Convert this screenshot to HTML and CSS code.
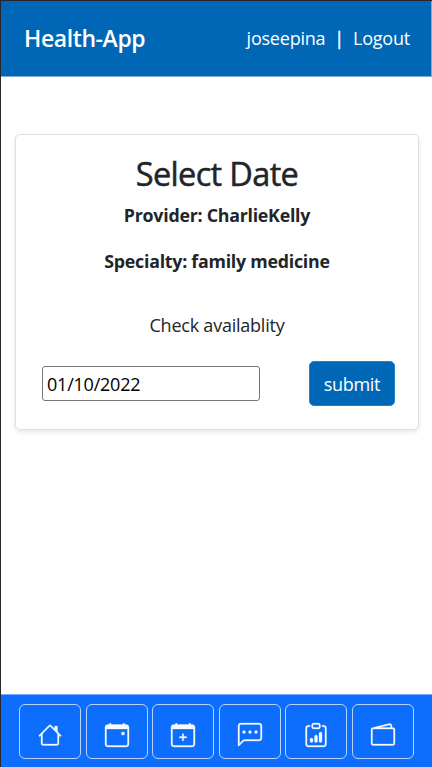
FILE: index.html
```html
<!DOCTYPE html>
<html lang="en">
<head>
<meta charset="utf-8">
<meta name="viewport" content="width=device-width, initial-scale=1">
<title>Health-App</title>
<link rel="stylesheet" href="styles.css">
</head>
<body>
<header class="topbar">
  <a class="brand">Health-App</a>
  <nav class="account"><a class="user">joseepina</a><span class="divider">|</span><a class="logout">Logout</a></nav>
</header>
<main>
  <section class="card">
    <h1><span>Select Date</span></h1>
    <p class="detail provider"><span>Provider: CharlieKelly</span></p>
    <p class="detail specialty"><span>Specialty: family medicine</span></p>
    <p class="prompt"><span>Check availablity</span></p>
    <form class="date-form">
      <input class="date" type="text" value="01/10/2022" aria-label="Date">
      <button class="submit" type="button"><span>submit</span></button>
    </form>
  </section>
</main>
<nav class="tabs">
  <a class="tab"><svg viewBox="0 0 16 16"><path fill-rule="evenodd" d="M2 13.5V7h1v6.5a.5.5 0 0 0 .5.5h9a.5.5 0 0 0 .5-.5V7h1v6.5a1.5 1.5 0 0 1-1.5 1.5h-9A1.5 1.5 0 0 1 2 13.5zm11-11V6l-2-2V2.500a.5.5 0 0 1 .5-.5h1a.5.5 0 0 1 .5.5z"/><path fill-rule="evenodd" d="M7.293 1.500a1 1 0 0 1 1.414 0l6.647 6.646a.5.5 0 0 1-.708.708L8 2.207 1.354 8.854a.5.5 0 1 1-.708-.708L7.293 1.500z"/></svg></a>
  <a class="tab"><svg viewBox="0 0 16 16"><path d="M11 6.5a.5.5 0 0 1 .5-.5h1a.5.5 0 0 1 .5.5v1a.5.5 0 0 1-.5.5h-1a.5.5 0 0 1-.5-.5v-1z"/><path d="M3.500 0a.5.5 0 0 1 .5.5V1h8V.5a.5.5 0 0 1 1 0V1h1a2 2 0 0 1 2 2v11a2 2 0 0 1-2 2H2a2 2 0 0 1-2-2V3a2 2 0 0 1 2-2h1V.5a.5.5 0 0 1 .5-.5zM1 4v10a1 1 0 0 0 1 1h12a1 1 0 0 0 1-1V4H1z"/></svg></a>
  <a class="tab"><svg viewBox="0 0 16 16"><path d="M8 7a.5.5 0 0 1 .5.5V9H10a.5.5 0 0 1 0 1H8.500v1.500a.5.5 0 0 1-1 0V10H6a.5.5 0 0 1 0-1h1.500V7.500A.5.5 0 0 1 8 7z"/><path d="M3.500 0a.5.5 0 0 1 .5.5V1h8V.5a.5.5 0 0 1 1 0V1h1a2 2 0 0 1 2 2v11a2 2 0 0 1-2 2H2a2 2 0 0 1-2-2V3a2 2 0 0 1 2-2h1V.5a.5.5 0 0 1 .5-.5zM1 4v10a1 1 0 0 0 1 1h12a1 1 0 0 0 1-1V4H1z"/></svg></a>
  <a class="tab"><svg viewBox="0 0 16 16"><path d="M14 1a1 1 0 0 1 1 1v8a1 1 0 0 1-1 1H4.414A2 2 0 0 0 3 11.586l-2 2V2a1 1 0 0 1 1-1h12zM2 0a2 2 0 0 0-2 2v12.793a.5.5 0 0 0 .854.353l2.853-2.853A1 1 0 0 1 4.414 12H14a2 2 0 0 0 2-2V2a2 2 0 0 0-2-2H2z"/><path d="M5 6a1 1 0 1 1-2 0 1 1 0 0 1 2 0zm4 0a1 1 0 1 1-2 0 1 1 0 0 1 2 0zm4 0a1 1 0 1 1-2 0 1 1 0 0 1 2 0z"/></svg></a>
  <a class="tab"><svg viewBox="0 0 16 16"><path d="M4 11a1 1 0 1 1 2 0v1a1 1 0 1 1-2 0v-1zm6-4a1 1 0 1 1 2 0v5a1 1 0 1 1-2 0V7zM7 9a1 1 0 0 1 2 0v3a1 1 0 1 1-2 0V9z"/><path d="M4 1.500H3a2 2 0 0 0-2 2V14a2 2 0 0 0 2 2h10a2 2 0 0 0 2-2V3.500a2 2 0 0 0-2-2h-1v1h1a1 1 0 0 1 1 1V14a1 1 0 0 1-1 1H3a1 1 0 0 1-1-1V3.500a1 1 0 0 1 1-1h1v-1z"/><path d="M9.500 1a.5.5 0 0 1 .5.5v1a.5.5 0 0 1-.5.5h-3a.5.5 0 0 1-.5-.5v-1a.5.5 0 0 1 .5-.5h3zm-3-1A1.500 1.500 0 0 0 5 1.500v1A1.500 1.500 0 0 0 6.500 4h3A1.500 1.500 0 0 0 11 2.500v-1A1.500 1.500 0 0 0 9.500 0h-3z"/></svg></a>
  <a class="tab"><svg viewBox="0 0 16 16"><path d="M12.136.326A1.500 1.500 0 0 1 14 1.780V3h.5A1.500 1.500 0 0 1 16 4.500v9a1.500 1.500 0 0 1-1.500 1.500h-13A1.500 1.500 0 0 1 0 13.500v-9a1.500 1.500 0 0 1 1.432-1.499L12.136.326zM5.562 3H13V1.780a.5.5 0 0 0-.621-.484L5.562 3zM1.500 4a.5.5 0 0 0-.5.5v9a.5.5 0 0 0 .5.5h13a.5.5 0 0 0 .5-.5v-9a.5.5 0 0 0-.5-.5h-13z"/></svg></a>
</nav>
</body>
</html>
```
FILE: styles.css
```css
* { box-sizing: border-box; }
html { height: 100%; }
body {
  margin: 0;
  height: 100%;
  overflow: hidden;
  display: flex;
  flex-direction: column;
  border-left: 1px solid #25272b;
  border-top: 1px solid #25272b;
  background: #fff;
  color: #212529;
  font: 18px/28px "Open Sans", "Noto Sans", sans-serif;
  white-space: nowrap;
}
h1, p { margin: 0; }
.topbar {
  flex: none;
  height: 76px;
  display: flex;
  justify-content: space-between;
  align-items: center;
  padding: 0 21px 2px 23px;
  background: #0067b6;
  border-bottom: 1px solid #77acd8;
  border-right: 1px solid #77acd8;
  color: #fff;
}
.brand { font-size: 23px; font-weight: 600; letter-spacing: -0.4px; }
.account { display: flex; letter-spacing: -0.22px; }
.divider { margin: 0 9px 0 9px; -webkit-text-stroke: .4px #fff; }
main { flex: 1; padding: 57px 13px 0 14px; }
.card {
  height: 296px;
  border: 1px solid #dfdfdf;
  border-radius: 5px;
  box-shadow: 0 2px 5px rgba(0, 0, 0, .1);
  text-align: center;
}
h1 {
  font-size: 32.5px;
  font-weight: 500;
  line-height: 40px;
  padding-top: 19px;
  letter-spacing: -0.65px;
  -webkit-text-stroke: .5px #212529;
}
.detail { font-weight: 700; font-size: 17.8px; letter-spacing: -0.25px; }
.provider { margin-top: 7px; }
.specialty { margin-top: 18px; }
.prompt { margin-top: 36px; letter-spacing: -0.23px; }
.date-form {
  display: flex;
  align-items: center;
  justify-content: space-between;
  margin: 22px 23px 0 26px;
}
.date {
  width: 218px;
  height: 35px;
  padding: 0 4px;
  border: 1px solid #767676;
  border-radius: 3px;
  background: #fff;
  color: #000;
  font: inherit;
  letter-spacing: -0.22px;
}
.submit {
  width: 86px;
  height: 45px;
  padding: 0;
  border: 1px solid #2680c6;
  border-radius: 5px;
  background: #0067b6;
  color: #fff;
  font: inherit;
  letter-spacing: -0.3px;
}
.tabs {
  flex: none;
  height: 73px;
  display: flex;
  gap: 4.6px;
  padding: 9px 18px 8px;
  border-top: 1px solid #6faaff;
  background: #0d6efd;
}
.tab {
  flex: 1;
  height: 55px;
  display: flex;
  align-items: center;
  justify-content: center;
  padding-top: 6px;
  border: 1px solid #b8d5ff;
  border-radius: 6px;
}
.tab svg {
  width: 24px;
  height: 24px;
  overflow: visible;
  fill: #f8f9fa;
  stroke: #f8f9fa;
  stroke-width: .2;
}
```
